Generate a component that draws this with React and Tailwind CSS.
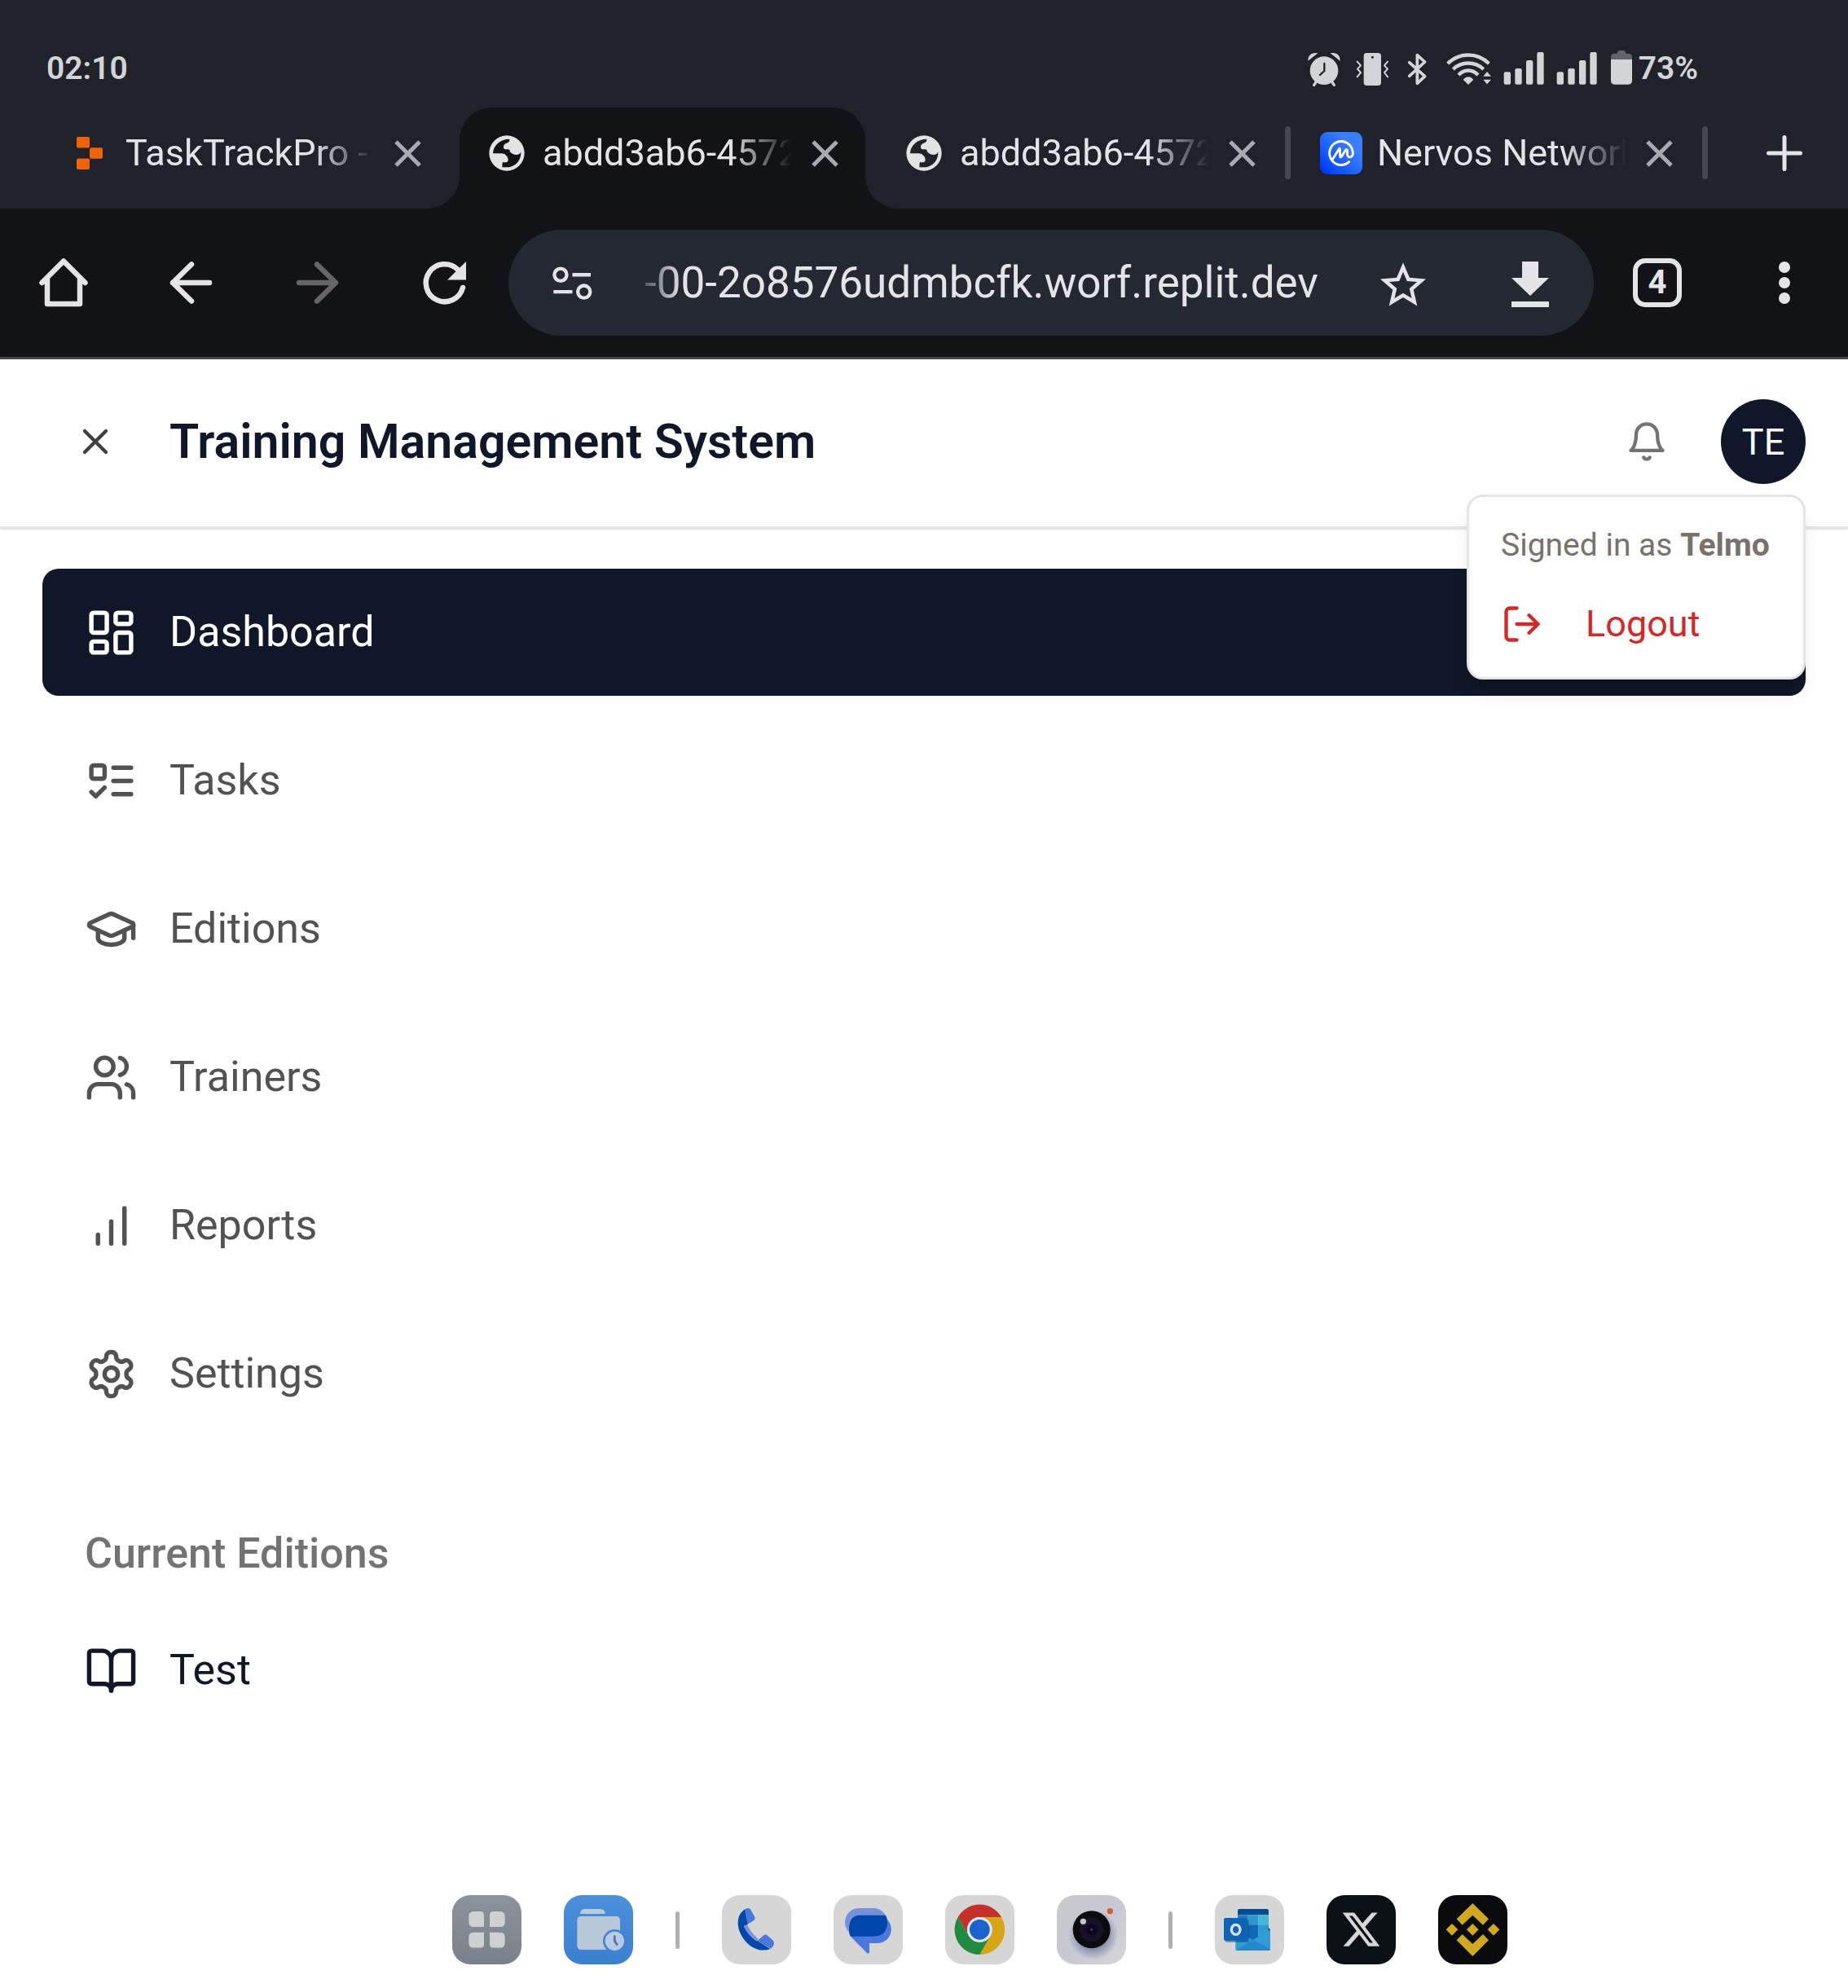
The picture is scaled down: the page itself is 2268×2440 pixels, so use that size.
import React from "react";
import { X, LayoutDashboard, GraduationCap, Users, BookOpen, LogOut } from "lucide-react";
import { SiCoinmarketcap } from "react-icons/si";

/* ---------- status bar icons ---------- */

function SignalBars() {
  return (
    <svg className="h-[44px] w-[51px]" viewBox="0 33 153 132" fill="currentColor" aria-hidden="true">
      <rect x="2" y="112" width="25" height="46" rx="6" />
      <rect x="43" y="99" width="25" height="59" rx="6" />
      <rect x="84" y="69" width="25" height="89" rx="6" />
      <rect x="124" y="39" width="25" height="119" rx="6" />
    </svg>
  );
}

function StatusIcons() {
  return (
    <div className="flex items-center gap-[14px] text-[#d3d4d6]">
      <svg className="h-[44px] w-[42px]" viewBox="30 33 126 132" fill="none" stroke="currentColor" strokeLinecap="round" aria-hidden="true">
        <circle cx="90" cy="107" r="52" fill="currentColor" stroke="none" />
        <path d="M31 71C30 50 45 38 67 43Z" fill="currentColor" stroke="none" />
        <path d="M149 71C150 50 135 38 113 43Z" fill="currentColor" stroke="none" />
        <path d="M61 148L53 160M119 148L127 160" strokeWidth="10" />
        <path d="M91 81V108L75 123" stroke="#20222b" strokeWidth="7" />
      </svg>
      <svg className="h-[44px] w-[47px]" viewBox="198 33 141 132" fill="none" stroke="currentColor" strokeWidth="6" strokeLinecap="round" strokeLinejoin="round" aria-hidden="true">
        <rect x="236" y="42" width="64" height="120" rx="11" fill="currentColor" stroke="none" />
        <circle cx="268" cy="58" r="4.5" fill="#20222b" stroke="none" />
        <path d="M212 74L225 88L213 101L225 114L212 130M324 74L312 88L324 101L312 114L324 130" />
      </svg>
      <svg className="h-[44px] w-[35px]" viewBox="381 33 105 132" fill="none" stroke="currentColor" strokeWidth="11" strokeLinecap="round" strokeLinejoin="round" aria-hidden="true">
        <path d="M404 77L461 128L433 154V50L461 75L404 127" />
      </svg>
      <svg className="h-[44px] w-[60px]" viewBox="528 33 180 132" fill="none" stroke="currentColor" strokeWidth="13" strokeLinecap="butt" aria-hidden="true">
        <path d="M545 81C588 39 654 39 697 81" />
        <path d="M565 102C596 72 646 72 677 102" />
        <path d="M585 123C606 101 636 101 657 123" />
        <path d="M602 140Q621 120 640 140L621 159Z" fill="currentColor" stroke="none" />
        <path d="M676 128L690 111L705 128ZM676 140L690 157L705 140Z" fill="currentColor" stroke="none" />
      </svg>
      <SignalBars />
      <SignalBars />
      <div className="flex items-center gap-[6px]">
        <svg className="h-[44px] w-[30px]" viewBox="1140 33 90 132" fill="currentColor" aria-hidden="true">
          <path d="M1146 68V58Q1146 44 1160 44H1169Q1170 33 1178 33H1192Q1200 33 1201 44H1210Q1224 44 1224 58V68Z" fill="#62636d" />
          <path d="M1146 66H1224V144Q1224 158 1210 158H1160Q1146 158 1146 144Z" />
        </svg>
        <span className="text-[39px] leading-[44px] font-semibold">73%</span>
      </div>
    </div>
  );
}

/* ---------- browser tabs ---------- */

function ReplitIcon() {
  return (
    <svg className="h-10 w-8" viewBox="0 0 32 40" fill="#f26207" aria-hidden="true">
      <rect x="0" y="0" width="16" height="13.6" rx="2" />
      <rect x="16" y="13.2" width="16" height="13.6" rx="2" />
      <rect x="0" y="26.4" width="16" height="13.6" rx="2" />
    </svg>
  );
}

function GlobeIcon({ hole }) {
  return (
    <svg className="size-[44px]" viewBox="32 34 132 132" aria-hidden="true">
      <circle cx="98" cy="100" r="65" fill="#e3e3e3" />
      <path
        fill={hole}
        d="M47 99C49 72 72 48 108 48L107 57C98 64 86 63 86 78Q87 86 95 86H104Q110 88 110 95Q118 106 134 106Q148 104 150 95C152 124 132 148 105 152H81L82 134H97Q103 132 103 124Q103 114 96 109Q91 101 80 101H47Z"
      />
    </svg>
  );
}

function CoinMarketCapIcon() {
  return (
    <span className="flex size-[52px] items-center justify-center rounded-[9px] bg-linear-to-tr from-[#0427ff] to-[#3a7dff] to-70% text-white">
      <SiCoinmarketcap className="size-[32px]" aria-hidden="true" />
    </span>
  );
}

function Tab({ icon, title, active, divider }) {
  return (
    <li className="flex min-w-0 flex-1 items-center">
      <div
        className={
          active
            ? "relative flex h-full min-w-0 flex-1 items-center rounded-t-[40px] bg-[#121317] pr-[33px] pb-3 pl-8"
            : "flex h-full min-w-0 flex-1 items-center pr-[33px] pb-3 pl-8"
        }
      >
        {active && (
          <>
            <span className="absolute right-full bottom-0 size-10 bg-[#121317]">
              <span className="block size-full rounded-br-[40px] bg-[#20222b]" />
            </span>
            <span className="absolute bottom-0 left-full size-10 bg-[#121317]">
              <span className="block size-full rounded-bl-[40px] bg-[#20222b]" />
            </span>
          </>
        )}
        <a href="#tab" className="flex min-w-0 flex-1 items-center gap-[18px]">
          <span className="flex w-[52px] shrink-0 justify-center">{icon}</span>
          <span className="min-w-0 flex-1 overflow-hidden text-[45px] leading-[60px] whitespace-nowrap text-[#e3e3e8] [mask-image:linear-gradient(to_right,black_75%,transparent)]">
            {title}
          </span>
        </a>
        <button type="button" aria-label="Close tab" className="ml-6 shrink-0 text-[#a9a9b0]">
          <svg className="size-[33px]" viewBox="0 0 33 33" fill="none" stroke="currentColor" strokeWidth="5" aria-hidden="true">
            <path d="M2 2L31 31M31 2L2 31" />
          </svg>
        </button>
      </div>
      <span className={divider ? "mr-1 mb-[14px] ml-[3px] h-[65px] w-[7px] rounded-full bg-[#46484f]" : "w-[14px]"} />
    </li>
  );
}

/* ---------- browser toolbar ---------- */

function ToolbarButton({ label, dim, children }) {
  return (
    <button
      type="button"
      aria-label={label}
      className={dim ? "flex w-[156px] shrink-0 justify-center text-[#646469]" : "flex w-[156px] shrink-0 justify-center text-[#e3e3e8]"}
    >
      <svg className="size-[78px]" viewBox="0 0 78 78" fill="none" stroke="currentColor" strokeWidth="6.5" strokeLinecap="round" strokeLinejoin="round" aria-hidden="true">
        {children}
      </svg>
    </button>
  );
}

function BrowserChrome() {
  return (
    <div className="bg-[#20222b]">
      <div className="flex h-[132px] items-center justify-between pt-[36px] pr-[184px] pl-[57px]">
        <span className="text-[39px] leading-[44px] font-semibold text-[#d3d4d6]">02:10</span>
        <StatusIcons />
      </div>

      <div className="flex h-[124px] pl-[52px]">
        <ul className="flex min-w-0 flex-1">
          <Tab icon={<ReplitIcon />} title="TaskTrackPro - Replit" />
          <Tab icon={<GlobeIcon hole="#121317" />} title="abdd3ab6-4572-4c" active />
          <Tab icon={<GlobeIcon hole="#20222b" />} title="abdd3ab6-4572-4c" divider />
          <Tab icon={<CoinMarketCapIcon />} title="Nervos Network" divider />
        </ul>
        <button type="button" aria-label="New tab" className="flex w-[168px] items-center justify-center pb-3 pl-3 text-[#e3e3e8]">
          <svg className="size-[44px]" viewBox="0 0 44 44" fill="none" stroke="currentColor" strokeWidth="5" strokeLinecap="round" aria-hidden="true">
            <path d="M22 2.5V41.5M2.5 22H41.5" />
          </svg>
        </button>
      </div>

      <div className="flex h-[185px] items-center border-b-[3px] border-[#46464f] bg-[#121317]">
        <ToolbarButton label="Home">
          <path d="M19 34V65H59V34M12.5 39L39 12.5L65.5 39" />
        </ToolbarButton>
        <ToolbarButton label="Back">
          <path d="M40 16.5L17 39L40 61.5M17 39H62" />
        </ToolbarButton>
        <ToolbarButton label="Forward" dim>
          <path d="M38 16.5L61 39L38 61.5M61 39H16" />
        </ToolbarButton>
        <ToolbarButton label="Reload">
          <path d="M55 23A23 23 0 1 0 61 45" />
          <path d="M65 13V35.5H42Z" fill="currentColor" stroke="none" />
        </ToolbarButton>

        <div className="flex h-[130px] min-w-0 flex-1 items-center rounded-full bg-[#242832] pl-[54px] text-[#e3e3e8]">
          <svg className="h-[41px] w-[49px] shrink-0" viewBox="263 514 148 124" fill="none" stroke="currentColor" strokeWidth="13" aria-hidden="true">
            <circle cx="293" cy="545" r="23" />
            <circle cx="380" cy="608" r="23" />
            <path d="M337 545H405M267 608H337" />
          </svg>
          <input
            type="text"
            aria-label="Address"
            defaultValue="-00-2o8576udmbcfk.worf.replit.dev"
            className="mr-[26px] ml-[49px] min-w-0 flex-1 bg-transparent text-right text-[53px] leading-[70px] outline-none [mask-image:linear-gradient(to_right,transparent,black_60px)]"
          />
          <ToolbarButton label="Bookmark this page">
            <path
              transform="translate(5.4 8.6) scale(2.8)"
              fill="currentColor"
              stroke="none"
              d="M22 9.24l-7.19-.62L12 2 9.19 8.63 2 9.24l5.46 4.73L5.82 21 12 17.27 18.18 21l-1.63-7.03L22 9.24zM12 15.4l-3.76 2.27 1-4.28-3.32-2.88 4.38-.38L12 6.1l1.71 4.04 4.38.38-3.32 2.88 1 4.28L12 15.4z"
            />
          </ToolbarButton>
          <ToolbarButton label="Download">
            <path d="M29 13H49V33H62L39 55L16 33H29ZM16 62H62V69H16Z" fill="currentColor" stroke="none" />
          </ToolbarButton>
        </div>

        <div className="flex w-[156px] shrink-0 justify-center">
          <button type="button" aria-label="4 open tabs" className="flex size-[60px] items-center justify-center rounded-[15px] border-[6px] border-[#e3e3e8] text-[40px] leading-[48px] font-bold text-[#e3e3e8]">
            4
          </button>
        </div>
        <ToolbarButton label="More">
          <g fill="currentColor" stroke="none">
            <circle cx="39" cy="20" r="7" />
            <circle cx="39" cy="39" r="7" />
            <circle cx="39" cy="58" r="7" />
          </g>
        </ToolbarButton>
      </div>
    </div>
  );
}

/* ---------- application ---------- */

function LineIcon({ className, children }) {
  return (
    <svg className={className} viewBox="0 0 24 24" fill="none" stroke="currentColor" strokeWidth="2" strokeLinecap="round" strokeLinejoin="round" aria-hidden="true">
      {children}
    </svg>
  );
}

function TasksIcon({ className }) {
  return (
    <LineIcon className={className}>
      <rect x="3" y="5" width="6" height="6" rx="1" />
      <path d="m3 17 2 2 4-4M13 6h8M13 12h8M13 18h8" />
    </LineIcon>
  );
}

function ReportsIcon({ className }) {
  return (
    <LineIcon className={className}>
      <path d="M12 20V10M18 20V4M6 20v-4" />
    </LineIcon>
  );
}

function SettingsIcon({ className }) {
  return (
    <LineIcon className={className}>
      <path d="M12.22 2h-.44a2 2 0 0 0-2 2v.18a2 2 0 0 1-1 1.73l-.43.25a2 2 0 0 1-2 0l-.15-.08a2 2 0 0 0-2.73.73l-.22.38a2 2 0 0 0 .73 2.73l.15.1a2 2 0 0 1 1 1.72v.51a2 2 0 0 1-1 1.74l-.15.09a2 2 0 0 0-.73 2.73l.22.38a2 2 0 0 0 2.73.73l.15-.08a2 2 0 0 1 2 0l.43.25a2 2 0 0 1 1 1.73V20a2 2 0 0 0 2 2h.44a2 2 0 0 0 2-2v-.18a2 2 0 0 1 1-1.73l.43-.25a2 2 0 0 1 2 0l.15.08a2 2 0 0 0 2.73-.73l.22-.39a2 2 0 0 0-.73-2.73l-.15-.08a2 2 0 0 1-1-1.74v-.5a2 2 0 0 1 1-1.74l.15-.09a2 2 0 0 0 .73-2.73l-.22-.38a2 2 0 0 0-2.73-.73l-.15.08a2 2 0 0 1-2 0l-.43-.25a2 2 0 0 1-1-1.73V4a2 2 0 0 0-2-2z" />
      <circle cx="12" cy="12" r="3" />
    </LineIcon>
  );
}

function AppHeader() {
  return (
    <header className="relative z-10 flex items-center border-b-[3px] border-[#e5e5e5] bg-white pr-[52px] pb-[3px] pl-[52px] shadow-sm">
      <button type="button" aria-label="Close menu" className="flex h-[202px] w-[130px] items-center justify-center text-[#404040]">
        <X className="size-[52px]" />
      </button>
      <h1 className="ml-[26px] flex-1 text-[59px] leading-[78px] font-semibold text-[#101728]">Training Management System</h1>
      <button type="button" aria-label="Notifications" className="mr-[26px] flex size-[130px] items-center justify-center text-[#737373]">
        <LineIcon className="size-[52px]">
          <path d="M6 8a6 6 0 0 1 12 0c0 7 3 9 3 9H3s3-2 3-9M10.3 21a1.94 1.94 0 0 0 3.4 0" />
        </LineIcon>
      </button>
      <div className="relative">
        <button type="button" aria-label="Account menu" className="flex size-[104px] items-center justify-center rounded-full bg-[#101728] text-[45px] leading-[65px] text-white">
          TE
        </button>
        <div className="absolute top-full right-0 mt-[13px] flex w-[416px] flex-col gap-[38px] rounded-[20px] border-[3px] border-[#e5e5e5] bg-white px-[39px] py-[33px] shadow-xl">
          <p className="text-[39px] leading-[52px] whitespace-nowrap text-[#78716c]">
            Signed in as <strong className="font-bold">Telmo</strong>
          </p>
          <button type="button" className="flex items-center gap-[52px] text-[45px] leading-[65px] text-[#d42727]">
            <LogOut className="size-[52px]" />
            Logout
          </button>
        </div>
      </div>
    </header>
  );
}

const NAV = [
  { label: "Dashboard", Icon: LayoutDashboard, active: true },
  { label: "Tasks", Icon: TasksIcon },
  { label: "Editions", Icon: GraduationCap },
  { label: "Trainers", Icon: Users },
  { label: "Reports", Icon: ReportsIcon },
  { label: "Settings", Icon: SettingsIcon },
];

function Sidebar() {
  return (
    <nav className="px-[52px] pt-[49px]">
      <ul className="flex flex-col gap-[26px]">
        {NAV.map(({ label, Icon, active }) => (
          <li key={label}>
            <a
              href={"#" + label.toLowerCase()}
              className={
                active
                  ? "flex h-[156px] items-center gap-[39px] rounded-[20px] bg-[#101728] px-[52px] text-[52px] leading-[78px] text-white"
                  : "flex h-[156px] items-center gap-[39px] rounded-[20px] px-[52px] text-[52px] leading-[78px] text-[#525252]"
              }
            >
              <Icon className="size-[65px]" />
              {label}
            </a>
          </li>
        ))}
      </ul>
      <h2 className="mt-[104px] px-[52px] text-[52px] leading-[78px] font-medium text-[#737373]">Current Editions</h2>
      <a href="#test" className="mt-[26px] flex h-[156px] items-center gap-[39px] px-[52px] text-[52px] leading-[78px] text-[#101728]">
        <BookOpen className="size-[65px]" />
        Test
      </a>
    </nav>
  );
}

/* ---------- dock ---------- */

function DockApp({ label, className, children }) {
  return (
    <a href="#app" aria-label={label} className={"block size-[85px] overflow-hidden rounded-[22px] " + className}>
      <svg className="size-full" viewBox="0 0 255 255" aria-hidden="true">
        {children}
      </svg>
    </a>
  );
}

function DockDivider() {
  return <span className="h-[46px] w-[5px] rounded-full bg-[#b0b0b0]" />;
}

function Dock() {
  return (
    <div className="mt-auto flex items-center justify-center gap-[52px] pb-[29px] pl-[137px]">
      <DockApp label="All apps" className="bg-linear-to-b from-[#8c939c] to-[#7a818b]">
        <g fill="#cfd0d2">
          <path d="M79 60H117V117H79Q61 117 61 99V78Q61 60 79 60Z" />
          <path d="M138 60H176Q194 60 194 78V99Q194 117 176 117H138Z" />
          <path d="M79 137H117V194H79Q61 194 61 176V155Q61 137 79 137Z" />
          <path d="M138 137H176Q194 137 194 155V176Q194 194 176 194H138Z" />
        </g>
        <g fill="none" stroke="#838a94" strokeWidth="6">
          <path d="M61 57H104Q120 57 120 73M194 57H151Q135 57 135 73M61 197H104Q120 197 120 181M194 197H151Q135 197 135 181" />
        </g>
      </DockApp>
      <DockApp label="My files" className="bg-linear-to-b from-[#4b90da] to-[#3a80d0]">
        <path d="M60 69Q61 51 78 51H135Q150 51 153 69Z" fill="#bccbdc" />
        <rect x="49" y="78" width="158" height="123" rx="14" fill="#b9c8d9" />
        <circle cx="187" cy="169" r="43" fill="#3f85d4" />
        <circle cx="187" cy="169" r="35" fill="#b9cbe0" />
        <path d="M187 152V170L196 182" fill="none" stroke="#3f78bd" strokeWidth="8" strokeLinecap="round" strokeLinejoin="round" />
      </DockApp>
      <DockDivider />
      <DockApp label="Phone" className="bg-[#d6d6d6]">
        <path d="M86 52C56 68 50 112 74 152C98 192 140 213 178 198L131 168L80 114L96 108Z" fill="#0047ab" />
        <path d="M80 115L94 110Q108 140 134 161L128 170Q98 152 80 115Z" fill="#7b95da" />
        <path d="M84 53L91 49Q101 45 106 54L120 79Q124 88 117 94L94 107Z" fill="#4c77dc" />
        <path d="M131 168L152 149Q160 142 168 149L186 165Q195 174 190 185Q187 192 180 197Z" fill="#4c77dc" />
      </DockApp>
      <DockApp label="Messages" className="bg-[#d6d6d6]">
        <path d="M94 48H146A52 52 0 0 1 198 100V152H94A52 52 0 0 1 94 48Z" fill="#7691d9" />
        <path d="M97 74H161A51 51 0 0 1 161 177H132V210Q130 218 123 213L70 160Q57 145 57 125Z" fill="#4c77dc" />
        <path d="M97 74H192Q198 86 198 100Q198 152 146 152H62Q57 140 57 125Q57 74 97 74Z" fill="#0047ab" />
      </DockApp>
      <DockApp label="Chrome" className="bg-[#d6d6d6]">
        <path d="M47 81A92 92 0 0 1 207 81H127A46 46 0 0 0 87 150Z" fill="#c4302a" />
        <path d="M207 81A92 92 0 0 1 127 219L167 150A46 46 0 0 0 127 81Z" fill="#d8a517" />
        <path d="M127 219A92 92 0 0 1 47 81L87 150A46 46 0 0 0 167 150Z" fill="#208a3e" />
        <circle cx="127" cy="127" r="46" fill="#e2e4e8" />
        <circle cx="127" cy="127" r="37" fill="#1a62cc" />
      </DockApp>
      <DockApp label="Camera" className="bg-linear-to-br from-[#cacaca] via-[#c6c8d4] to-[#d6d6d6]">
        <defs>
          <radialGradient id="lens-shadow">
            <stop offset="50%" stopColor="#5d6890" />
            <stop offset="100%" stopColor="#5d6890" stopOpacity="0" />
          </radialGradient>
          <radialGradient id="lens-glass">
            <stop offset="0%" stopColor="#4b2a86" />
            <stop offset="35%" stopColor="#120c26" />
            <stop offset="75%" stopColor="#17102e" />
            <stop offset="100%" stopColor="#15171b" />
          </radialGradient>
        </defs>
        <circle cx="134" cy="146" r="92" fill="url(#lens-shadow)" opacity="0.7" />
        <circle cx="128" cy="127" r="69" fill="#090b0d" />
        <circle cx="128" cy="127" r="44" fill="url(#lens-glass)" />
        <circle cx="128" cy="127" r="19" fill="#0b0716" />
        <circle cx="128" cy="127" r="5" fill="#4b2a86" />
        <circle cx="97" cy="97" r="11" fill="#c6c6c6" />
        <circle cx="196" cy="59" r="11" fill="#dc5a28" />
      </DockApp>
      <DockDivider />
      <DockApp label="Outlook" className="bg-[#d6d6d6]">
        <path d="M84 73V57Q84 51 90 51H191Q198 51 198 57V73Z" fill="#024c8f" />
        <rect x="84" y="73" width="38" height="36" fill="#1a7cc8" />
        <rect x="122" y="73" width="38" height="36" fill="#2c9ad0" />
        <rect x="160" y="73" width="38" height="36" fill="#46b6dc" />
        <rect x="84" y="109" width="38" height="60" fill="#0b559f" />
        <rect x="122" y="109" width="38" height="60" fill="#0f67b8" />
        <rect x="160" y="109" width="38" height="60" fill="#2e9bd0" />
        <path d="M197 120L205 128L197 133Z" fill="#12315a" />
        <path d="M76 135L140 165L204 127V198Q204 204 198 204H82Q76 204 76 198Z" fill="#2e9dd8" />
        <path d="M140 165L76 204H198Q204 204 204 198Z" fill="#2389cc" />
        <rect x="38" y="90" width="87" height="84" rx="6" fill="#0a3a70" opacity="0.45" />
        <rect x="33" y="84" width="87" height="84" rx="6" fill="#0f63b5" />
        <ellipse cx="77" cy="127" rx="16" ry="18" fill="none" stroke="#d6e2ef" strokeWidth="10" />
      </DockApp>
      <DockApp label="X" className="bg-[#0b1014]">
        <path
          transform="translate(51 50) scale(6.35)"
          fill="#d6d6d6"
          d="M18.244 2.25h3.308l-7.227 8.26 8.502 11.24H16.17l-5.214-6.817L4.99 21.75H1.68l7.73-8.835L1.254 2.25H8.08l4.713 6.231zm-1.161 17.52h1.833L7.084 4.126H5.117z"
        />
      </DockApp>
      <DockApp label="Binance" className="bg-[#0a0b0d]">
        <g fill="#d0a91f">
          <path d="M127 30L186 88L165 110L127 74L89 110L68 88Z" />
          <path d="M127 225L186 166L165 144L127 180L89 144L68 166Z" />
          <path d="M127 105L149 127L127 149L105 127Z" />
          <path d="M51 105L73 127L51 149L29 127Z" />
          <path d="M204 105L226 127L204 149L182 127Z" />
        </g>
      </DockApp>
    </div>
  );
}

export default function App() {
  return (
    <div className="flex min-h-screen flex-col bg-white font-[Roboto,'Open_Sans',sans-serif]">
      <BrowserChrome />
      <AppHeader />
      <Sidebar />
      <Dock />
    </div>
  );
}
